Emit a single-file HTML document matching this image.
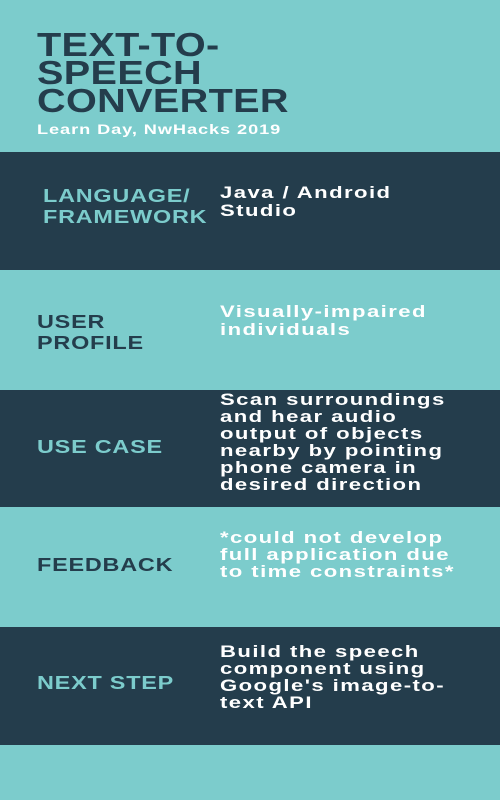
<!DOCTYPE html>
<html><head><style>
body{margin:0;width:500px;height:800px;background:#7ccccc;position:relative;overflow:hidden;font-family:"Liberation Sans",sans-serif;font-weight:bold}
.b{position:absolute;left:0;width:500px;background:#243d4c}
.t{position:absolute;transform:scaleX(1.3);transform-origin:left top;white-space:nowrap}
.title{left:37px;top:31px;font-size:33px;line-height:28px;color:#243d4c;letter-spacing:0.3px;transform:scaleX(1.2)}
.sub{left:37px;top:121px;font-size:14px;color:#fff;letter-spacing:0.7px}
.r{left:220px;font-size:17px;line-height:17px;color:#fff;letter-spacing:1.1px}
.l{left:37px;font-size:18px;line-height:21px;letter-spacing:0.6px}
.lt{color:#7ccccc}.ld{color:#243d4c}
</style></head><body>
<div class="b" style="top:152px;height:118px"></div>
<div class="b" style="top:390px;height:117px"></div>
<div class="b" style="top:627px;height:118px"></div>
<div class="t title">TEXT-TO-<br>SPEECH<br>CONVERTER</div>
<div class="t sub">Learn Day, NwHacks 2019</div>
<div class="t l lt" style="left:43px;top:186px">LANGUAGE/<br>FRAMEWORK</div>
<div class="t r" style="top:184px;line-height:18px">Java / Android<br>Studio</div>
<div class="t l ld" style="top:312px">USER<br>PROFILE</div>
<div class="t r" style="top:303px;line-height:18px">Visually-impaired<br>individuals</div>
<div class="t l lt" style="top:437px">USE CASE</div>
<div class="t r" style="top:391px">Scan surroundings<br>and hear audio<br>output of objects<br>nearby by pointing<br>phone camera in<br>desired direction</div>
<div class="t l ld" style="top:555px">FEEDBACK</div>
<div class="t r" style="top:529px">*could not develop<br>full application due<br>to time constraints*</div>
<div class="t l lt" style="top:673px">NEXT STEP</div>
<div class="t r" style="top:643px">Build the speech<br>component using<br>Google's image-to-<br>text API</div>
</body></html>
